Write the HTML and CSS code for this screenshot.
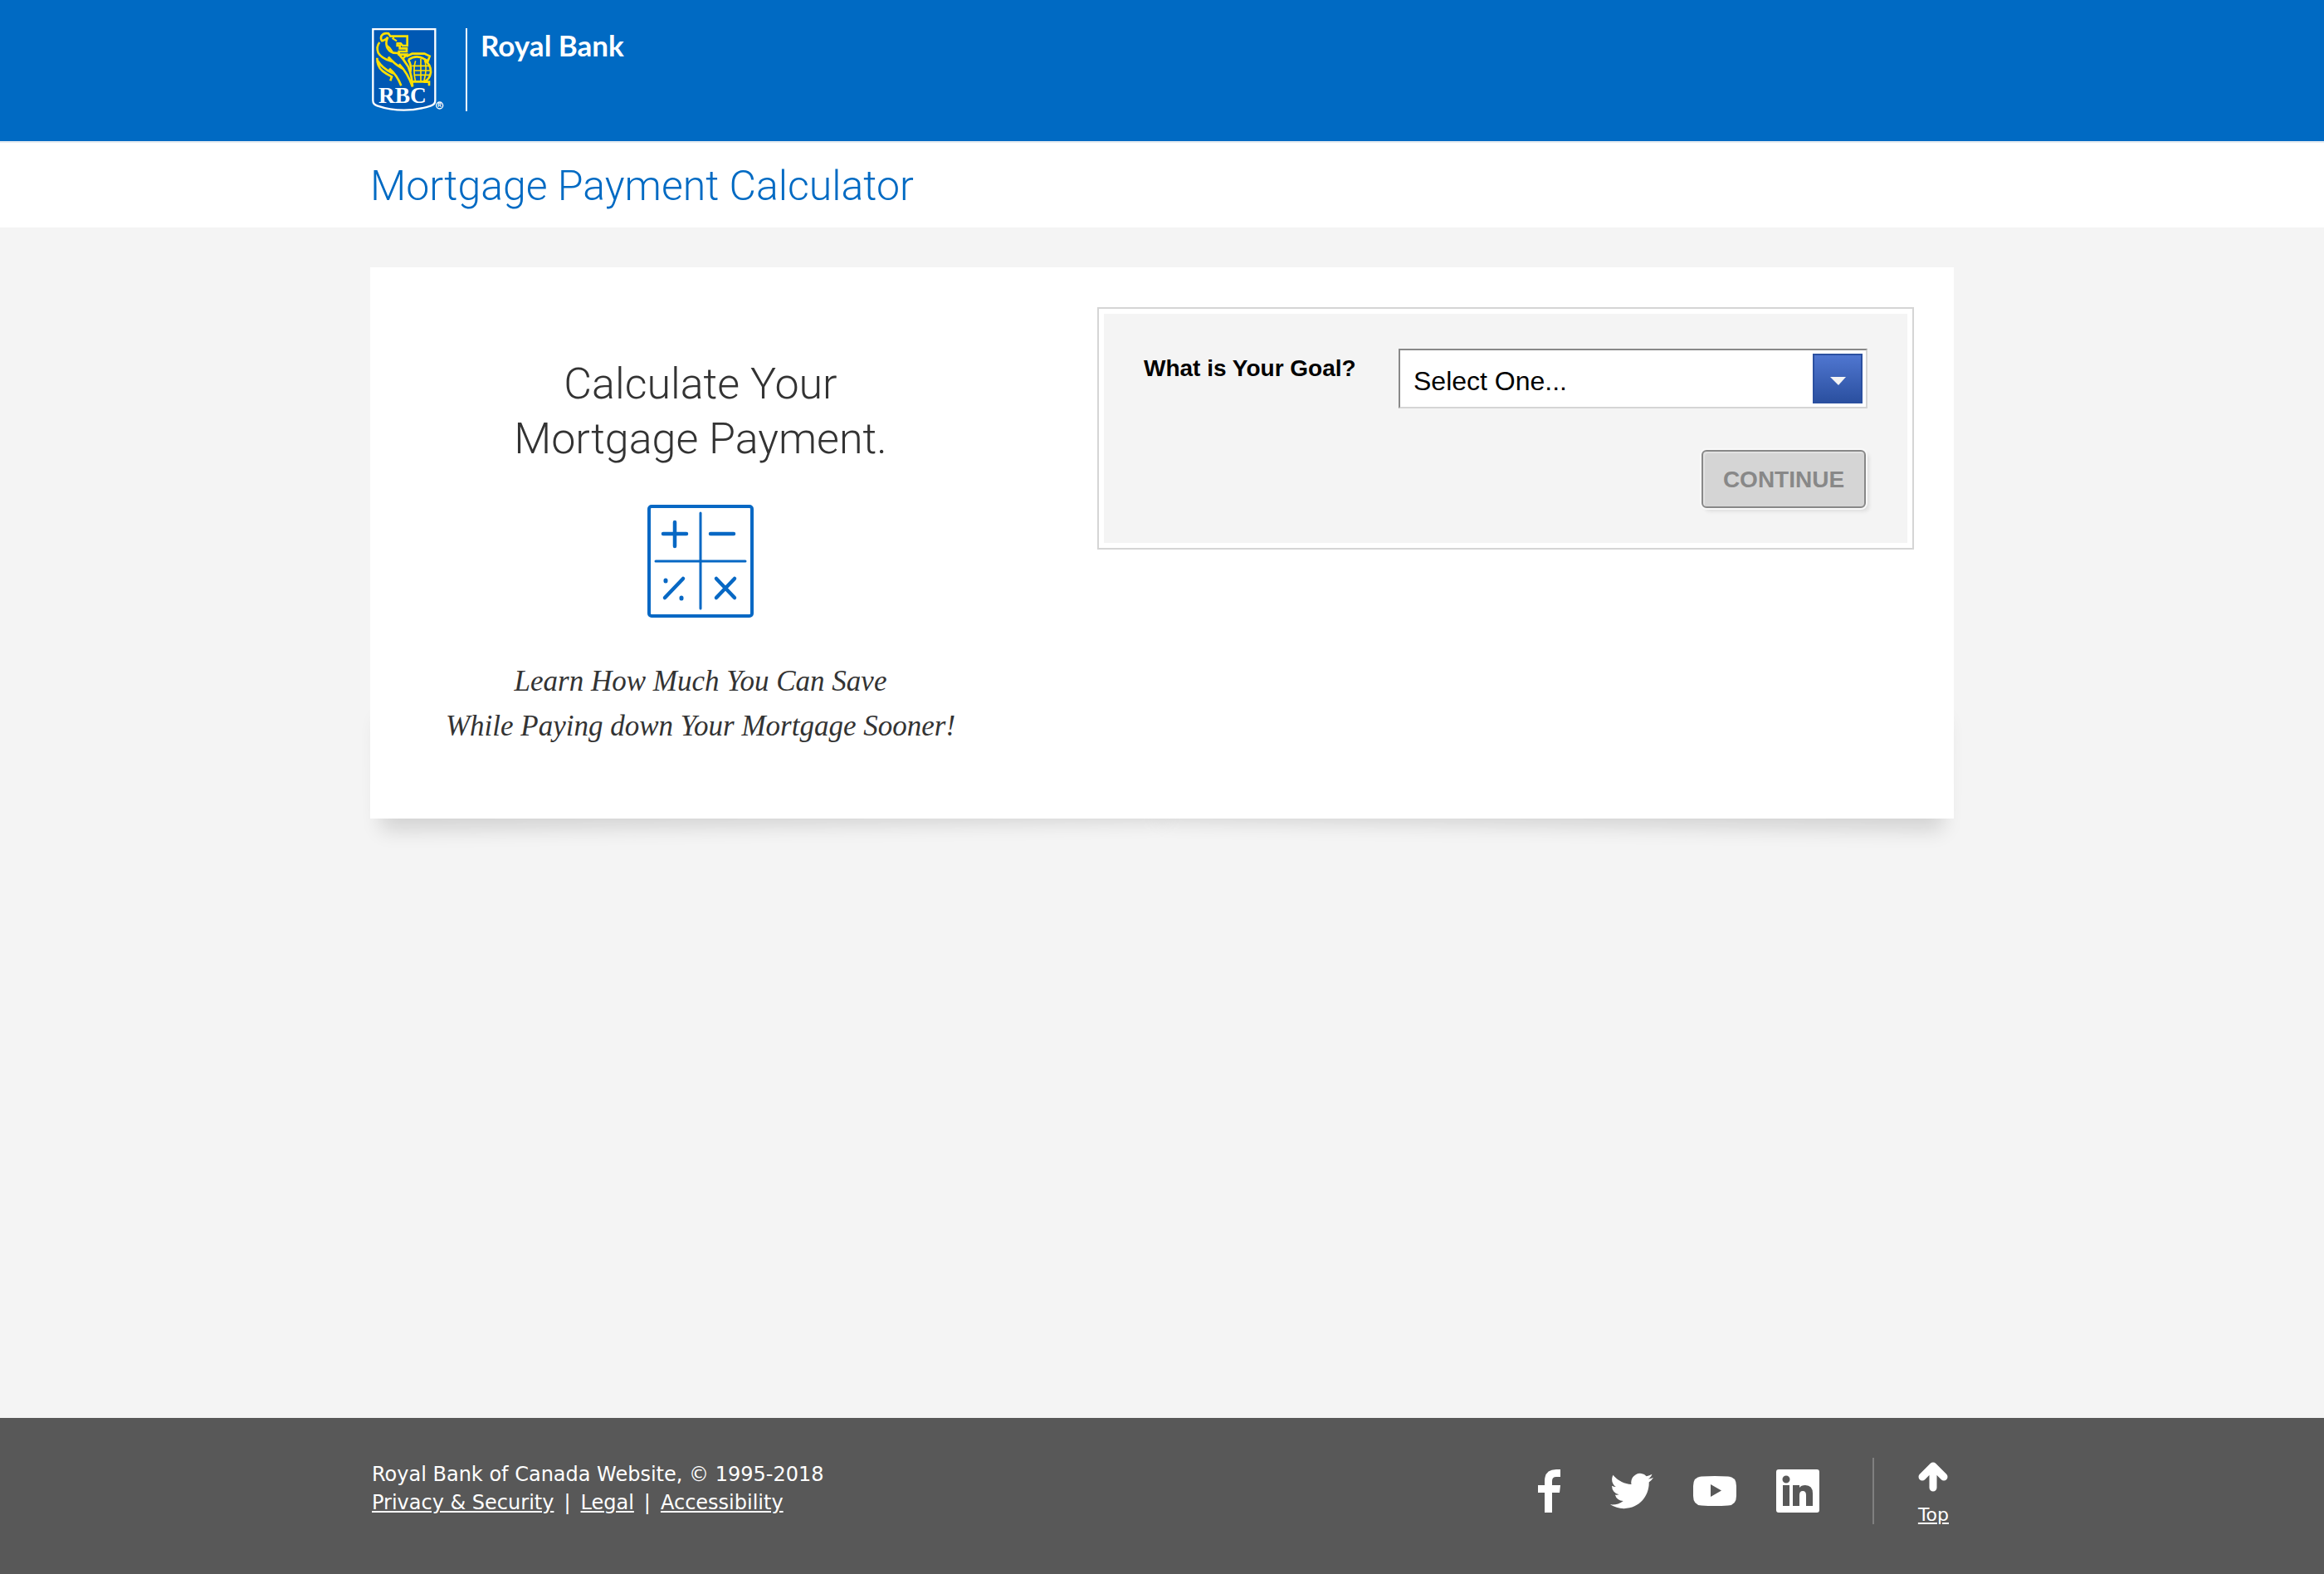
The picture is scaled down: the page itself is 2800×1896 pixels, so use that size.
FILE: index.html
```html
<!DOCTYPE html>
<html lang="en">
<head>
<meta charset="utf-8">
<title>Mortgage Payment Calculator</title>
<link rel="stylesheet" href="styles.css">
</head>
<body id="top">
<header class="masthead">
  <div class="wrap brand">
    <svg class="shield" viewBox="54 42 261 300" aria-label="RBC" role="img">
      <path d="M58 45H283V303Q283 317 268 322Q220 338 170 338Q120 338 73 322Q58 317 58 303Z" fill="#0058b3" stroke="#fff" stroke-width="7"/>
      <g fill="none" stroke="#ffe000" stroke-width="8" stroke-linejoin="miter">
        <path d="M93 90Q84 82 88 71Q95 58 114 61L121 71H182V105H165L158 97H144"/>
        <path d="M134 72L130 79L144 88" stroke-width="6"/>
        <path d="M146 94V105H155V115H180V126H152V137H179L172 146L165 153"/>
        <path d="M93 88Q106 84 112 74Q103 92 108 108Q113 124 132 131L148 132Q168 152 186 182Q199 214 201 252"/>
        <path d="M108 104Q120 112 128 126" stroke-width="6"/>
        <path d="M82 93Q69 108 77 131Q88 150 120 160L114 146Q134 170 160 185L153 172Q184 204 201 254"/>
        <path d="M73 149Q73 180 92 196Q106 207 126 217L121 232M75 160Q94 188 124 202L118 188Q146 212 160 250"/>
        <path d="M178 144L200 134H244L263 143L257 160L241 152Q214 136 186 156"/>
        <path d="M186 156Q199 178 193 200"/>
        <path d="M244 158Q268 172 267 202Q263 229 241 235L201 235M241 236H261V250"/>
        <path d="M212 160Q202 190 211 231M231 152V231M246 160Q254 190 243 231M199 178H262M206 195H268M207 211H264" stroke-width="5"/>
      </g>
      <text class="shield-name" x="78" y="312">RBC</text>
      <circle cx="299" cy="321" r="12" fill="none" stroke="#fff" stroke-width="4"/>
      <text class="shield-mark" x="292" y="328">R</text>
    </svg>
    <span class="brand-name">Royal Bank</span>
  </div>
</header>
<div class="title-bar">
  <div class="wrap"><h1 class="page-title">Mortgage Payment Calculator</h1></div>
</div>
<main class="main">
  <div class="wrap card">
    <section class="intro">
      <h2 class="intro-title">Calculate Your<br>Mortgage Payment.</h2>
      <svg class="calc" viewBox="0 0 128 136" fill="none" stroke="#0768c4" stroke-width="4" stroke-linecap="round" aria-hidden="true">
        <rect x="2" y="2" width="124" height="132" rx="3"/>
        <path d="M64 10V125M10 68H118" stroke-width="3"/>
        <path d="M19 35H47M33 21V50M76 35H104M21 112L43 89M83 89L105 112M105 89L83 112" stroke-width="4.500"/>
        <path d="M22 91V92M41 112V113" stroke-width="5"/>
      </svg>
      <p class="intro-text">Learn How Much You Can Save<br>While Paying down Your Mortgage Sooner!</p>
    </section>
    <form class="goal">
      <div class="goal-row">
        <label class="goal-label" for="goal">What is Your Goal?</label>
        <div class="picker">
          <select class="picker-select" id="goal"><option>Select One...</option></select>
          <span class="picker-button"><svg viewBox="0 0 20 10" class="caret" aria-hidden="true"><path d="M0 0H19L10 10Z" fill="#f4f4f4"/></svg></span>
        </div>
      </div>
      <button class="continue" type="button" disabled>CONTINUE</button>
    </form>
  </div>
</main>
<footer class="footer">
  <div class="wrap footer-row">
    <div class="legal">
      <div>Royal Bank of Canada Website, © 1995-2018</div>
      <nav class="legal-links"><a href="#privacy">Privacy &amp; Security</a><span>|</span><a href="#legal">Legal</a><span>|</span><a href="#accessibility">Accessibility</a></nav>
    </div>
    <div class="footer-side">
      <nav class="social">
        <a href="#facebook" aria-label="Facebook"><svg viewBox="0 0 52 52"><path d="M21 52V28H13V19H21V14Q21 0 35 0H40V9H35Q30 9 30 14V19H40L39 28H30V52Z"/></svg></a>
        <a href="#twitter" aria-label="Twitter"><svg viewBox="0 0 24 24"><path d="M23.953 4.57a10 10 0 01-2.825.775 4.958 4.958 0 002.163-2.723c-.951.555-2.005.959-3.127 1.184a4.92 4.92 0 00-8.384 4.482C7.69 8.095 4.067 6.13 1.64 3.162a4.822 4.822 0 00-.666 2.475c0 1.71.87 3.213 2.188 4.096a4.904 4.904 0 01-2.228-.616v.06a4.923 4.923 0 003.946 4.827 4.996 4.996 0 01-2.212.085 4.936 4.936 0 004.604 3.417 9.867 9.867 0 01-6.102 2.105c-.39 0-.779-.023-1.17-.067a13.995 13.995 0 007.557 2.209c9.053 0 13.998-7.496 13.998-13.985 0-.21 0-.42-.015-.63A9.935 9.935 0 0024 4.59z"/></svg></a>
        <a href="#youtube" aria-label="YouTube"><svg viewBox="0 0 52 52"><path fill-rule="evenodd" d="M10 8.500Q26 7.500 42 8.500Q52 9 52 20V32Q52 43 42 43.500Q26 44.500 10 43.500Q0 43 0 32V20Q0 9 10 8.500ZM21 18V33L34 25.500Z"/></svg></a>
        <a href="#linkedin" aria-label="LinkedIn"><svg viewBox="0 0 52 52"><path fill-rule="evenodd" d="M3 0H49Q52 0 52 3V49Q52 52 49 52H3Q0 52 0 49V3Q0 0 3 0ZM8 19V44H16V19ZM12 7.500A4.500 4.500 0 1 0 12 16.500A4.500 4.500 0 1 0 12 7.500ZM20 19V44H28V31Q28 26 32 26Q36 26 36 31V44H44V29Q44 19 35 19Q30 19 28 22V19Z"/></svg></a>
      </nav>
      <a class="to-top" href="#top">
        <svg class="arrow" viewBox="0 0 36 36" fill="none" stroke="#fff" stroke-width="9" stroke-linecap="round" stroke-linejoin="round" aria-hidden="true"><path d="M18 6V31M5 18L18 5L31 18"/></svg>
        <span>Top</span>
      </a>
    </div>
  </div>
</footer>
</body>
</html>
```

FILE: styles.css
```css
* { box-sizing: border-box; }
html, body { margin: 0; }
body {
  min-height: 100vh;
  display: flex;
  flex-direction: column;
  background: #f4f4f4;
  color: #000;
  font-family: "Liberation Sans", Arial, sans-serif;
}
.wrap { width: 100%; max-width: 1908px; margin: 0 auto; }

.masthead { background: #006ac3; border-bottom: 2px solid #e6ebf1; }
.brand { display: flex; align-items: flex-start; padding: 34px 0 36px 2px; }
.shield { width: 87px; height: 100px; }
.shield-name { font: bold 82px "Liberation Serif", serif; fill: #fff; }
.shield-mark { font: bold 19px "Liberation Sans", sans-serif; fill: #fff; }
.brand-name {
  height: 100px;
  margin-left: 26px;
  padding-left: 16px;
  border-left: 2px solid #fff;
  color: #fff;
  font: bold 35px/40px Lato, sans-serif;
}

.title-bar { background: #fff; }
.page-title {
  margin: 0;
  padding: 22px 0 20px;
  color: #006ac3;
  font: 300 50px/60px Roboto, sans-serif;
}

.main { position: relative; z-index: 0; flex: 1; padding: 48px 0; }
.card {
  position: relative;
  display: flex;
  align-items: flex-start;
  justify-content: space-between;
  min-height: 664px;
  padding: 48px;
  background: #fff;
}
.card::before,
.card::after {
  content: "";
  position: absolute;
  z-index: -1;
  bottom: 22px;
  width: calc(50% - 12px);
  height: 20%;
  box-shadow: 0 30px 24px rgba(0, 0, 0, 0.14);
}
.card::before { left: 12px; transform: rotate(-0.7deg); }
.card::after { right: 12px; transform: rotate(0.7deg); }

.intro {
  display: flex;
  flex-direction: column;
  align-items: center;
  width: 700px;
  padding-top: 60px;
  text-align: center;
  color: #333;
}
.intro-title { margin: 0; font: 300 52px/66px Roboto, sans-serif; }
.calc { width: 128px; height: 136px; margin: 46px 0 50px; }
.intro-text { margin: 0; font: italic 35px/54px "Liberation Serif", serif; white-space: nowrap; }

.goal {
  width: 984px;
  padding: 42px 48px 48px;
  border: 2px solid #d5d5d5;
  outline: 6px solid #fff;
  outline-offset: -8px;
  background: #f4f4f4;
}
.goal-row { display: flex; justify-content: space-between; margin: 6px 6px 50px; }
.goal-label { font: bold 28px/32px "Liberation Sans", sans-serif; padding-top: 8px; }
.picker {
  position: relative;
  width: 565px;
  height: 72px;
  border: 2px solid;
  border-color: #888 #d5d5d5 #d5d5d5 #888;
  background: #fff;
}
.picker-select {
  appearance: none;
  width: 100%;
  height: 100%;
  padding: 6px 70px 0 16px;
  border: 0;
  background: transparent;
  color: #000;
  font: 32px/40px "Liberation Sans", sans-serif;
}
.picker-button {
  position: absolute;
  top: 4px;
  right: 4px;
  display: grid;
  place-items: center;
  width: 60px;
  height: 60px;
  border: 2px solid #2b50a0;
  background: linear-gradient(#4f76d0, #2b50a0);
  pointer-events: none;
}
.caret { width: 20px; height: 10px; margin: 6px 0 0 2px; }
.continue {
  display: block;
  width: 198px;
  height: 70px;
  margin: 0 8px 0 auto;
  padding: 2px 0 0;
  border: 2px solid #888;
  border-radius: 6px;
  background: #d5d5d5;
  box-shadow: inset 2px 2px 0 #e2e2e2, 0 0 0 2px #f9f9f9, 4px 4px 4px #ddd;
  color: #888;
  font: bold 28px/32px "Liberation Sans", sans-serif;
}

.footer { background: #585858; color: #fff; font: 24px/34px "DejaVu Sans", sans-serif; }
.footer a { color: #fff; }
.footer-row { display: flex; justify-content: space-between; padding: 48px 0 60px; }
.legal { padding: 3px 2px; }
.legal-links { display: flex; gap: 12px; }
.footer-side { display: flex; }
.social { display: flex; align-items: center; gap: 48px; padding-right: 64px; border-right: 2px solid #808080; }
.social svg { display: block; width: 52px; height: 52px; fill: #fff; }
.to-top {
  display: flex;
  flex-direction: column;
  align-items: center;
  gap: 17px;
  padding: 5px 6px 0 53px;
  font-size: 22px;
  line-height: 22px;
}
.arrow { width: 36px; height: 36px; }
```
